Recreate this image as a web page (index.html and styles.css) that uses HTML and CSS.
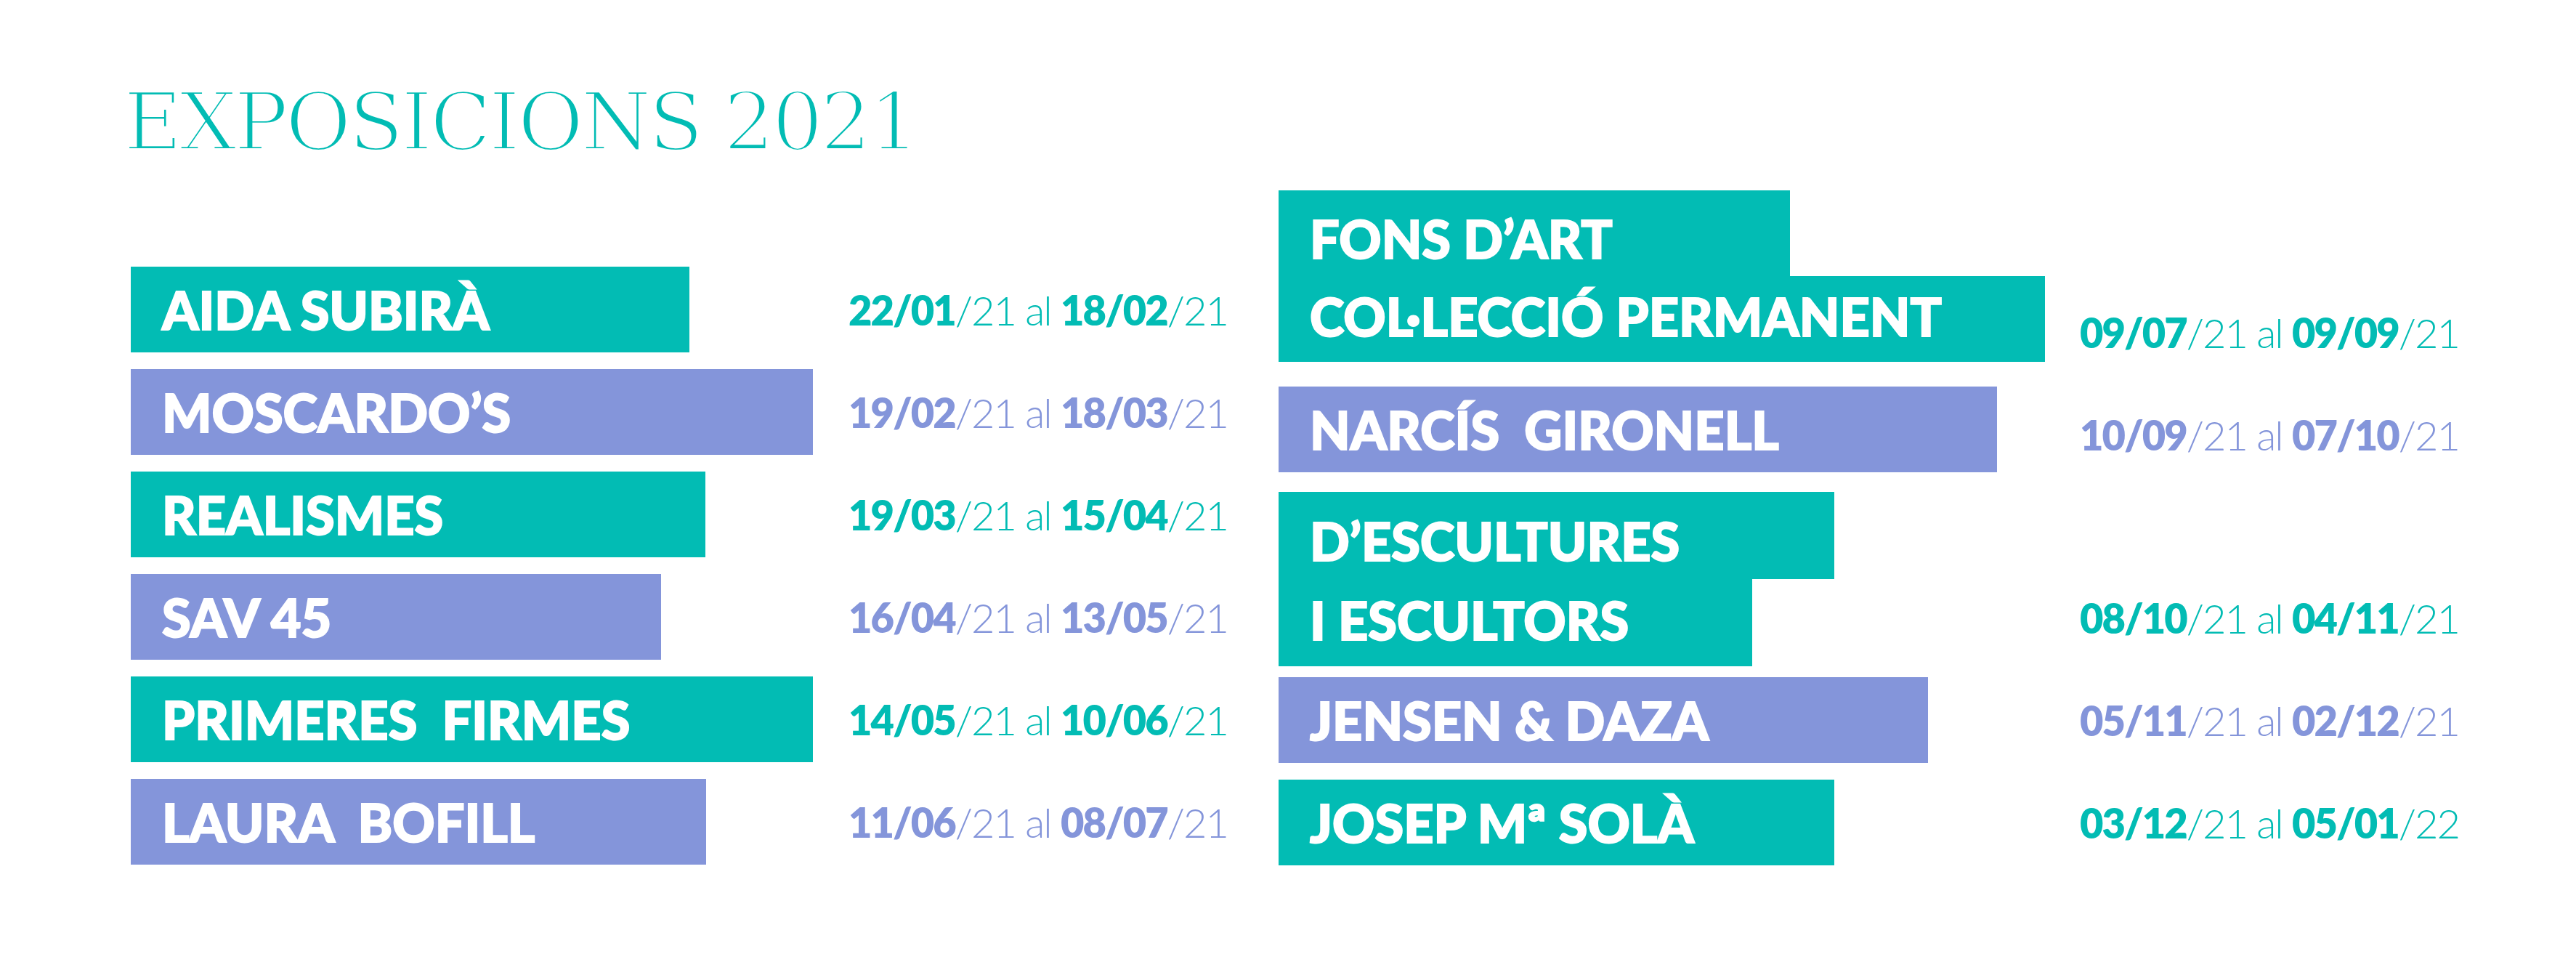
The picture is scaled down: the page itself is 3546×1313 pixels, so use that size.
FILE: index.html
```html
<!DOCTYPE html>
<html>
<head>
<meta charset="utf-8">
<title>Exposicions 2021</title>
<link rel="stylesheet" href="styles.css">
</head>
<body>
    <div class="page">
        <h1 class="title">EXPOSICIONS 2021</h1>
        <div class="board">
            <div class="col col-left">
                <div class="row teal">
                    <div class="bar"><span class="line" style="width:769px">AIDA SUBIRÀ</span></div>
                    <p class="dates"><span class="range"><b>22/01</b>/21 al <b>18/02</b>/21</span></p>
                </div>
                <div class="row lilac">
                    <div class="bar"><span class="line" style="width:939px">MOSCARDO’S</span></div>
                    <p class="dates"><span class="range"><b>19/02</b>/21 al <b>18/03</b>/21</span></p>
                </div>
                <div class="row teal">
                    <div class="bar"><span class="line" style="width:791px">REALISMES</span></div>
                    <p class="dates"><span class="range"><b>19/03</b>/21 al <b>15/04</b>/21</span></p>
                </div>
                <div class="row lilac">
                    <div class="bar"><span class="line" style="width:730px">SAV 45</span></div>
                    <p class="dates"><span class="range"><b>16/04</b>/21 al <b>13/05</b>/21</span></p>
                </div>
                <div class="row teal">
                    <div class="bar"><span class="line" style="width:939px">PRIMERES&nbsp; FIRMES</span></div>
                    <p class="dates"><span class="range"><b>14/05</b>/21 al <b>10/06</b>/21</span></p>
                </div>
                <div class="row lilac">
                    <div class="bar"><span class="line" style="width:792px">LAURA&nbsp; BOFILL</span></div>
                    <p class="dates"><span class="range"><b>11/06</b>/21 al <b>08/07</b>/21</span></p>
                </div>
            </div>

            <div class="col col-right">
                <div class="row teal">
                    <div class="bar">
                        <span class="line first" style="width:704px">FONS D’ART</span>
                        <span class="line last" style="width:1055px">COL·LECCIÓ PERMANENT</span>
                    </div>
                    <p class="dates low"><span class="range"><b>09/07</b>/21 al <b>09/09</b>/21</span></p>
                </div>
                <div class="row lilac gap-34">
                    <div class="bar"><span class="line" style="width:989px">NARCÍS&nbsp; GIRONELL</span></div>
                    <p class="dates lowish"><span class="range"><b>10/09</b>/21 al <b>07/10</b>/21</span></p>
                </div>
                <div class="row teal gap-27">
                    <div class="bar">
                        <span class="line first tall" style="width:765px">D’ESCULTURES</span>
                        <span class="line last tall" style="width:652px">I ESCULTORS</span>
                    </div>
                    <p class="dates high"><span class="range"><b>08/10</b>/21 al <b>04/11</b>/21</span></p>
                </div>
                <div class="row lilac gap-15">
                    <div class="bar"><span class="line" style="width:894px">JENSEN &amp; DAZA</span></div>
                    <p class="dates"><span class="range"><b>05/11</b>/21 al <b>02/12</b>/21</span></p>
                </div>
                <div class="row teal gap-23">
                    <div class="bar"><span class="line" style="width:765px">JOSEP Mª SOLÀ</span></div>
                    <p class="dates"><span class="range"><b>03/12</b>/21 al <b>05/01</b>/22</span></p>
                </div>
            </div>
        </div>
    </div>
</body>
</html>
```

FILE: styles.css
```css
body {
    margin: 0;
    background: #fff;
}

.page {
    width: 3546px;
    height: 1313px;
    box-sizing: border-box;
    padding: 112px 0 0 180px;
}

.teal {
    --c: #02bcb4;
}

.lilac {
    --c: #8495da;
}

.title {
    margin: 0 0 39px -10px;
    font-family: "DejaVu Serif", serif;
    font-weight: normal;
    font-size: 111px;
    line-height: 111px;
    letter-spacing: -4px;
    color: #02bcb4;
    -webkit-text-stroke: 4px #fff;
}

.board {
    display: grid;
    grid-template-columns: 1510px 1625px;
    column-gap: 70px;
    align-items: start;
}

.col {
    display: flex;
    flex-direction: column;
}

.col-left {
    padding-top: 105px;
    gap: 23px;
}

.row {
    display: flex;
    align-items: flex-end;
    justify-content: space-between;
}

.gap-34 { margin-top: 34px; }
.gap-27 { margin-top: 27px; }
.gap-23 { margin-top: 23px; }
.gap-15 { margin-top: 15px; }

.bar {
    display: flex;
    flex-direction: column;
    align-items: flex-start;
}

.line {
    display: flex;
    align-items: center;
    box-sizing: border-box;
    height: 118px;
    padding-left: 43px;
    background: var(--c);
    color: #fff;
    font-family: Lato, "Open Sans", sans-serif;
    font-weight: 900;
    font-size: 72px;
    white-space: nowrap;
    -webkit-text-stroke: 2px #fff;
}

.line.first {
    padding-top: 14px;
}

.line.last {
    padding-bottom: 8px;
}

.line.tall {
    height: 120px;
}

.dates {
    margin: 0;
    box-sizing: border-box;
    height: 118px;
    display: flex;
    align-items: center;
    color: var(--c);
    font-family: Lato, "Open Sans", sans-serif;
    font-weight: 300;
    font-size: 56px;
    white-space: nowrap;
}

.dates.low { padding-top: 36px; }
.dates.lowish { padding-top: 14px; }
.dates.high { padding-bottom: 16px; }

.range {
    letter-spacing: -2px;
}

.range b {
    font-weight: 800;
}
```
